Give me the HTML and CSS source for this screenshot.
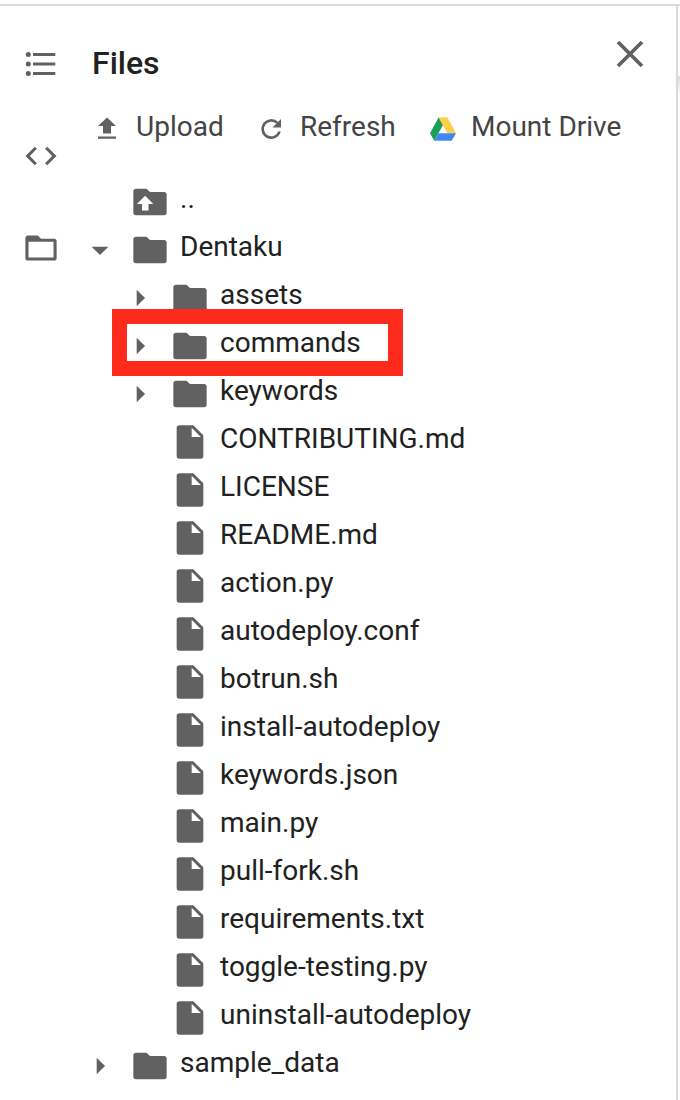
FILE: index.html
```html
<!DOCTYPE html>
<html lang="en">
<head>
<meta charset="utf-8">
<title>Files</title>
<link rel="stylesheet" href="styles.css">
</head>
<body>
<svg width="0" height="0" class="defs">
  <symbol id="folder" viewBox="0 0 24 24"><path d="M9.900 4H3.500C2.700 4 2 4.700 2 5.500v13c0 .9.6 1.500 1.500 1.500h17c.9 0 1.500-.6 1.500-1.500V7.500c0-.9-.6-1.500-1.500-1.500H12z"/></symbol>
  <symbol id="file" viewBox="0 0 24 24"><path d="M5.500 2C4.600 2 4 2.600 4 3.500v17c0 .9.6 1.500 1.500 1.500h13c.9 0 1.500-.6 1.500-1.500V8l-6-6zM13 9V3.500L18.500 9z"/></symbol>
  <symbol id="right" viewBox="0 0 24 24"><path d="M10 17l5-5-5-5z"/></symbol>
  <symbol id="down" viewBox="0 0 24 24"><path d="M7 10l5 5 5-5z"/></symbol>
</svg>
<div class="app">
  <nav class="rail">
    <svg class="rail-icon" viewBox="0 0 40 40"><circle cx="7.300" cy="10.500" r="2.500"/><circle cx="7.300" cy="20" r="2.500"/><circle cx="7.300" cy="29.500" r="2.500"/><path d="M12 9h22.300v3H12zM12 18.500h22.300v3H12zM12 28h22.300v3H12z"/></svg>
    <svg class="rail-icon" viewBox="-.9 -.9 25.800 25.800"><path d="M9.400 16.600L4.800 12l4.600-4.600L8 6l-6 6 6 6 1.400-1.400zm5.200 0l4.600-4.600-4.600-4.600L16 6l6 6-6 6-1.400-1.400z"/></svg>
    <svg class="rail-icon" viewBox="-.8 -.8 25.600 25.600"><path fill-rule="evenodd" d="M9.900 4H3.500C2.700 4 2 4.700 2 5.500v13c0 .9.6 1.500 1.500 1.500h17c.9 0 1.500-.6 1.500-1.500v-11c0-.9-.6-1.500-1.500-1.500H12zM4 8h16v10H4z"/></svg>
  </nav>
  <main class="panel">
    <header class="head">
      <h1 class="title">Files</h1>
      <svg class="close" viewBox="0 0 30 30"><path d="M3 3l24 24M27 3L3 27"/></svg>
    </header>
    <div class="toolbar">
      <div class="tool upload"><svg class="tool-icon" viewBox="0 0 28 28"><path d="M14 3.500l9 8.500h-5v7.500h-8V12H5zM5 22.500h18v2.300H5z"/></svg><span>Upload</span></div>
      <div class="tool refresh"><svg class="tool-icon" viewBox="0 0 28 28"><path class="arc" d="M22.500 17.500A8.600 8.600 0 1 1 20.300 8.900"/><path d="M24 5v8.500h-8.500z"/></svg><span>Refresh</span></div>
      <div class="tool drive"><svg class="tool-icon" viewBox="0 0 28 28"><path fill="#1e9e5a" d="M9.700 3.300L14 11 5.300 26.700 1 19.300z"/><path fill="#ffcf48" d="M9.700 3.300h8.600L27 19.300h-8.700z"/><path fill="#4285f4" d="M9.500 19.300H27l-4.300 7.400H5.300z"/></svg><span>Mount Drive</span></div>
    </div>
    <div class="tree">
      <div class="row d0"><svg class="ic"></svg><svg class="ic" viewBox="0 0 24 24"><use href="#folder"/><path class="cut" d="M9.100 8.300l4.900 4.900h-2.900v3.900H7.200v-3.900H4.200z"/></svg><span>..</span></div>
      <div class="row d0"><svg class="ic"><use href="#down"/></svg><svg class="ic"><use href="#folder"/></svg><span>Dentaku</span></div>
      <div class="row d1"><svg class="ic"><use href="#right"/></svg><svg class="ic"><use href="#folder"/></svg><span>assets</span></div>
      <div class="row d1 marked"><svg class="ic"><use href="#right"/></svg><svg class="ic"><use href="#folder"/></svg><span>commands</span></div>
      <div class="row d1"><svg class="ic"><use href="#right"/></svg><svg class="ic"><use href="#folder"/></svg><span>keywords</span></div>
      <div class="row d1"><svg class="ic"></svg><svg class="ic"><use href="#file"/></svg><span>CONTRIBUTING.md</span></div>
      <div class="row d1"><svg class="ic"></svg><svg class="ic"><use href="#file"/></svg><span>LICENSE</span></div>
      <div class="row d1"><svg class="ic"></svg><svg class="ic"><use href="#file"/></svg><span>README.md</span></div>
      <div class="row d1"><svg class="ic"></svg><svg class="ic"><use href="#file"/></svg><span>action.py</span></div>
      <div class="row d1"><svg class="ic"></svg><svg class="ic"><use href="#file"/></svg><span>autodeploy.conf</span></div>
      <div class="row d1"><svg class="ic"></svg><svg class="ic"><use href="#file"/></svg><span>botrun.sh</span></div>
      <div class="row d1"><svg class="ic"></svg><svg class="ic"><use href="#file"/></svg><span>install-autodeploy</span></div>
      <div class="row d1"><svg class="ic"></svg><svg class="ic"><use href="#file"/></svg><span>keywords.json</span></div>
      <div class="row d1"><svg class="ic"></svg><svg class="ic"><use href="#file"/></svg><span>main.py</span></div>
      <div class="row d1"><svg class="ic"></svg><svg class="ic"><use href="#file"/></svg><span>pull-fork.sh</span></div>
      <div class="row d1"><svg class="ic"></svg><svg class="ic"><use href="#file"/></svg><span>requirements.txt</span></div>
      <div class="row d1"><svg class="ic"></svg><svg class="ic"><use href="#file"/></svg><span>toggle-testing.py</span></div>
      <div class="row d1"><svg class="ic"></svg><svg class="ic"><use href="#file"/></svg><span>uninstall-autodeploy</span></div>
      <div class="row d0"><svg class="ic"><use href="#right"/></svg><svg class="ic"><use href="#folder"/></svg><span>sample_data</span></div>
    </div>
  </main>
  <aside class="edge"></aside>
</div>
</body>
</html>
```
FILE: styles.css
```css
*, *::after { box-sizing: border-box; }
body {
  margin: 0;
  background: #fff;
  font-family: Roboto, "Liberation Sans", sans-serif;
  color: #212121;
}
svg { display: block; flex: none; fill: #616161; }
.defs { position: absolute; }
.app {
  display: flex;
  height: 1100px;
  padding-top: 4px;
  overflow: hidden;
}
.rail {
  width: 80px;
  padding: 38px 0 0 21px;
  border-top: 2px solid #dadada;
  display: flex;
  flex-direction: column;
  gap: 52px;
}
.rail-icon { width: 40px; height: 40px; }
.panel {
  width: 598px;
  border-top: 2px solid #dadada;
  border-right: 2px solid #dadada;
}
.edge {
  flex: 1;
  border-top: 2px solid #dadada;
  background: linear-gradient(#dcdcdc, #fff) 0 70px / 100% 20px no-repeat;
}
.head {
  height: 98px;
  padding: 33px 31px 0 12px;
  display: flex;
  justify-content: space-between;
  align-items: flex-start;
}
.title {
  margin: 4px 0 0;
  font-size: 32px;
  line-height: 40px;
  font-weight: 500;
}
.close { width: 30px; height: 30px; fill: none; stroke: #616161; stroke-width: 3.7; }
.toolbar {
  height: 70px;
  display: flex;
  align-items: flex-start;
  font-size: 28px;
  line-height: 46px;
  color: #444;
}
.tool { display: flex; }
.tool-icon { width: 28px; height: 28px; margin-top: 10px; }
.arc { fill: none; stroke: #616161; stroke-width: 2.6; }
.upload { width: 164px; padding-left: 13px; gap: 15px; }
.refresh { width: 169px; padding-left: 13px; gap: 15px; }
.drive { padding-left: 16px; gap: 14px; }
.row {
  position: relative;
  height: 48px;
  display: flex;
  align-items: flex-start;
  font-size: 28px;
  line-height: 50px;
  white-space: nowrap;
}
.d1 { padding-left: 40px; }
.ic { width: 40px; height: 40px; margin-top: 8px; }
.ic + .ic, .ic + span { margin-left: 10px; }
.cut { fill: #fff; }
.marked { z-index: 1; }
.marked::after {
  content: "";
  position: absolute;
  left: 31.500px;
  top: -8.700px;
  width: 291px;
  height: 66.300px;
  border: 15px solid #fe2a1c;
}
```
